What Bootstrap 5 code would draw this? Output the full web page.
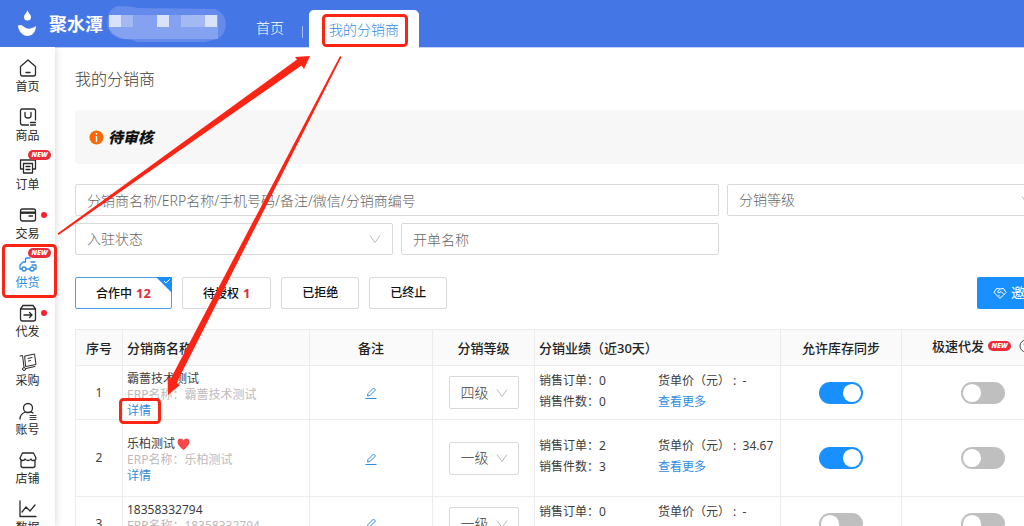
<!DOCTYPE html>
<html lang="zh-CN">
<head>
<meta charset="utf-8">
<meta name="viewport" content="width=device-width, initial-scale=1">
<title>我的分销商</title>
<link href="https://cdn.jsdelivr.net/npm/bootstrap@5.3.0/dist/css/bootstrap.min.css" rel="stylesheet">
<style>
:root{--brand:#4576e6;--blue:#1890ff;--alert:#fb2516;--line:#ececec}
body{font-family:"Noto Sans","Noto Sans CJK SC",sans-serif;font-size:12px;line-height:16px;color:#3c3c3c;height:100vh;overflow:hidden}
a{text-decoration:none;color:#2f8be0}
.topbar{height:47px;background:var(--brand);box-shadow:0 1px 0 #c3d2f7;flex:none}
.brand{font-size:18px;line-height:24px;font-weight:700;width:256px;padding-left:18px}
.brand-mark{margin-right:12px}
.top-link{font-size:14px;line-height:20px;color:#fff;font-weight:300}
.top-tab{background:#fff;color:#2f8be0;border-radius:5px 5px 0 0;padding:10px 20px 7px;margin-top:10px;height:38px;font-size:14px;line-height:20px;font-weight:300}
.top-rule{width:1px;height:12px;background:#a9c0f5;margin:0 6px 0 18px}
.side{width:55px;flex:none;padding-top:11px;box-shadow:0 0 8px rgba(0,0,0,.18);background:#fff;z-index:1}
.side-item{height:49px;color:#2a2a2a;flex:none;line-height:18px}
.side-item svg{width:18px;height:20px;fill:none;stroke:currentColor;stroke-width:1.3;stroke-linecap:round;stroke-linejoin:round}
.side-item.on{color:#2f8be0}
.new-tag{background:#ea2c3a;color:#fff;font:italic 900 7px/10px "Open Sans",sans-serif;border-radius:5px;width:23px;height:10px;text-align:center;display:inline-block}
.side .new-tag{position:absolute;left:28px;top:-6px}
.side-dot{position:absolute;left:41px;top:7px;width:6px;height:6px;border-radius:50%;background:#f5222d}
.sheet{width:calc(100% + 40px);padding:0 0 0 20px}
.sheet h1{font-size:16px;line-height:24px;font-weight:300;margin:20px 0 19px}
.notice{height:54px;background:#f7f7f7;border-radius:4px;padding-left:14px;font-size:15px;line-height:22px;font-weight:900;font-style:italic;color:#111}
.filters{display:grid;grid-template-columns:repeat(3,1fr);gap:7px 8px;margin:20px 19px 22px 0}
.filters .wide{grid-column:span 2}
.filters .form-control,.filters .form-select{height:32px;border:1px solid #d9d9d9;border-radius:2px;padding:4px 11px;font-size:14px;line-height:22px;font-weight:300;color:#666}
.filters .form-control::placeholder{color:#666}
.form-select{background-image:url("data:image/svg+xml,%3Csvg xmlns='http://www.w3.org/2000/svg' viewBox='0 0 12 12'%3E%3Cpath d='M1 2.5l5 7 5-7' fill='none' stroke='%23b8b8b8'/%3E%3C/svg%3E");background-size:12px 12px;background-position:right 11px center}
.states{gap:10px}
.state-btn{height:32px;border:1px solid #d9d9d9;border-radius:2px;background:#fff;padding:0 20px;font-size:12px;font-weight:500;color:#111;position:relative}
.state-btn b{color:#d9303a;font-size:13px;margin-left:4px}
.state-btn.on{border-color:#4a9fe8}
.state-btn svg{position:absolute;right:-1px;top:-1px}
.invite{height:32px;width:87px;background:var(--blue);color:#fff;border:0;border-radius:2px;font-size:14px;padding:0 0 0 16px;gap:4px}
.grid-table{table-layout:fixed;width:100%;margin:20px 0 0;border-collapse:collapse}
.grid-table th,.grid-table td{border:1px solid var(--line);padding:0 4px;vertical-align:middle}
.grid-table th{height:36px;background:#fafafa;font-size:13px;line-height:20px;font-weight:500;color:#222}
.grid-table td{height:54px}
.grid-table .tall td{height:77px}
.grid-table .who{padding-top:4px}
.erp{color:#c0b9bb}
.rank{width:70px;height:33px;border:1px solid #d9d9d9;border-radius:2px;font-size:14px;line-height:22px;padding:4px 11px;color:#3c3c3c;font-weight:300;margin:auto;background-position:right 10px center}
.perf{display:grid;grid-template-columns:119px 1fr;line-height:21px;white-space:nowrap;padding-bottom:4px}
.form-switch{padding:0;min-height:0;margin:0;display:flex;justify-content:center}
.form-switch .form-check-input{width:44px;height:22px;margin:0;border:0;background-color:#bfbfbf;float:none;background-image:url("data:image/svg+xml,%3Csvg xmlns='http://www.w3.org/2000/svg' viewBox='-4 -4 8 8'%3E%3Ccircle r='3.3' fill='%23fff'/%3E%3C/svg%3E")}
.form-switch .form-check-input:checked{background-color:var(--blue);background-image:url("data:image/svg+xml,%3Csvg xmlns='http://www.w3.org/2000/svg' viewBox='-4 -4 8 8'%3E%3Ccircle r='3.3' fill='%23fff'/%3E%3C/svg%3E")}
.marks{position:absolute;left:0;top:0;pointer-events:none;z-index:5}
</style>
</head>
<body class="d-flex flex-column position-relative">
<header class="topbar d-flex align-items-center text-white">
  <div class="brand d-flex align-items-center">
    <svg width="19" height="27" viewBox="0 0 19 27" fill="#fff" class="brand-mark"><path d="M9.500 0C10 3 13 4.500 13 7a3.500 3.500 0 0 1-7 0C6 4.500 9 3 9.500 0z"/><path d="M0 15.500c3-1.500 5 .5 7 2s6 2 11-1.500C18 22 14 26 9.500 26S0 21 0 15.500z"/></svg>
    <span>聚水潭</span>
    <svg class="ms-1" width="120" height="36" viewBox="0 0 120 36" aria-hidden="true"><path d="M10 0Q26 0 30 2L108 3Q119 8 119 18 118 32 106 34L98 36H30Q26 33 14 33 0 28 0 17 0 4 10 0z" fill="#648bec"/><path d="M2 9h109v24H18Q2 29 2 20z" fill="#84a2f0"/><path d="M2 9h12v12H2zM50 9h12v12H50zM98 9h12v12H98z" fill="#d8e2fb"/><path d="M14 9h12v12H14zM74 9h24v12H74z" fill="#a3b9f4"/></svg>
  </div>
  <a href="#" class="top-link pt-3 pb-2">首页</a>
  <span class="top-rule mt-3"></span>
  <a href="#" class="top-tab">我的分销商</a>
</header>
<div class="d-flex flex-grow-1 overflow-hidden">
  <nav class="side d-flex flex-column">
    <a href="#" class="side-item position-relative d-flex flex-column align-items-center"><svg viewBox="0 0 18 20"><path d="M1.500 8.500L9 2l7.500 6.500V16q0 2-2 2h-11q-2 0-2-2zM7 14.500h4"/></svg>首页</a>
    <a href="#" class="side-item position-relative d-flex flex-column align-items-center"><svg viewBox="0 0 18 20"><path d="M9.500 18h-6q-2 0-2-2V4q0-2 2-2h11q2 0 2 2v9M6 5.500v3q0 2.500 3 2.500t3-2.500v-3M11.500 15.500h5M11.500 18h5"/></svg>商品</a>
    <a href="#" class="side-item position-relative d-flex flex-column align-items-center"><svg viewBox="0 0 18 20"><path d="M4 13H1.500V4h15v9H14M4.500 7.500h9V17h-9zM7 10.500h4M7 13.500h4"/></svg>订单<span class="new-tag">NEW</span></a>
    <a href="#" class="side-item position-relative d-flex flex-column align-items-center"><svg viewBox="0 0 18 20"><path d="M3.500 4h11q2 0 2 2v8q0 2-2 2h-11q-2 0-2-2V6q0-2 2-2zM1.500 8h15M10 11h3.500"/><path d="M2 7.500h14" stroke-width="2"/></svg>交易<span class="side-dot"></span></a>
    <a href="#" class="side-item on position-relative d-flex flex-column align-items-center"><svg viewBox="0 0 18 20"><path d="M11 4H7.500q-1 0-1 1v3H4L1 11v4h2M7 15h4M15 15h2v-3M12 8h4M13 11h4M3 15a2 2 0 0 0 4 0 2 2 0 0 0-4 0M11 15a2 2 0 0 0 4 0 2 2 0 0 0-4 0"/></svg>供货<span class="new-tag">NEW</span></a>
    <a href="#" class="side-item position-relative d-flex flex-column align-items-center"><svg viewBox="0 0 18 20"><path d="M1.500 6L4 2.500h10L16.500 6v10q0 2-2 2h-11q-2 0-2-2zM1.500 6h15M5 12h8M10.500 9.500L13 12l-2.500 2.500"/></svg>代发<span class="side-dot"></span></a>
    <a href="#" class="side-item position-relative d-flex flex-column align-items-center"><svg viewBox="0 0 18 20" style="stroke-width:1"><path d="M1 4l2.500-.5L5 15M6 4l9.500-2L17 12.500l-10 2zM9 6.500l4-1M9.500 9l2-.5M7 16.500l9-2M3.500 17a1.500 1.500 0 0 0 3 0 1.500 1.500 0 0 0-3 0"/></svg>采购</a>
    <a href="#" class="side-item position-relative d-flex flex-column align-items-center"><svg viewBox="0 0 18 20"><path d="M4.500 7a4.500 4.500 0 0 0 9 0 4.500 4.500 0 0 0-9 0M1 18q0-5 5.500-7M11.500 11q1.500.3 2.500 1"/><path d="M11 14.500h6M11 16.500h6M11 18.500h6" stroke-width=".9"/></svg>账号</a>
    <a href="#" class="side-item position-relative d-flex flex-column align-items-center"><svg viewBox="0 0 18 20"><path d="M3.500 3h11L17 8q0 2.500-2.500 2.500T12 9q-1 1.500-3 1.500T6 9q-.5 1.500-2.500 1.500T1 8zM2 11v4.500q0 2 2 2h10q2 0 2-2V11"/></svg>店铺</a>
    <a href="#" class="side-item position-relative d-flex flex-column align-items-center"><svg viewBox="0 0 18 20"><path d="M1 2v15.500h16M3 13l4-5 4 4 5-6"/></svg>数据</a>
  </nav>
  <main class="flex-grow-1 overflow-hidden">
    <div class="sheet">
      <h1>我的分销商</h1>
      <div class="notice d-flex align-items-center"><svg width="15" height="15" viewBox="0 0 15 15" class="me-1"><circle cx="7.500" cy="7.500" r="7" fill="#fa6a0a"/><path d="M7.500 3v1.500M7.500 6v6" stroke="#fff" stroke-width="1.300"/></svg>待审核</div>
      <form class="filters">
        <input class="form-control wide" type="text" aria-label="分销商" placeholder="分销商名称/ERP名称/手机号码/备注/微信/分销商编号">
        <select class="form-select" aria-label="分销等级"><option>分销等级</option></select>
        <select class="form-select" aria-label="入驻状态"><option>入驻状态</option></select>
        <input class="form-control" type="text" aria-label="开单名称" placeholder="开单名称">
      </form>
      <div class="states d-flex align-items-center">
        <button type="button" class="state-btn on">合作中<b>12</b><svg width="16" height="16" viewBox="0 0 16 16"><path d="M0 0h16v16z" fill="#1890ff"/><path d="M8 4l2 2 4-4" fill="none" stroke="#fff"/></svg></button>
        <button type="button" class="state-btn">待授权<b>1</b></button>
        <button type="button" class="state-btn">已拒绝</button>
        <button type="button" class="state-btn">已终止</button>
        <button type="button" class="invite d-flex align-items-center ms-auto"><svg width="14" height="14" viewBox="0 0 14 14" fill="none" stroke="#fff"><path d="M7 12.500L1 6.500 3.500 2.500 7 3l3.500-.5L13 6.500zM7 3L4.500 6l1.500 1 2-1.500 3 3M5.500 9l1.500 1.500"/></svg>邀请</button>
      </div>
      <table class="grid-table">
        <colgroup><col width="47"><col><col width="123"><col width="102"><col width="246"><col width="121"><col width="162"></colgroup>
        <thead><tr>
          <th class="text-center">序号</th><th>分销商名称</th><th class="text-center">备注</th><th class="text-center">分销等级</th><th>分销业绩（近30天）</th><th class="text-center">允许库存同步</th>
          <th><div class="d-flex align-items-center justify-content-center gap-1 pb-1">极速代发<span class="new-tag">NEW</span><svg class="ms-1" width="14" height="14" viewBox="0 0 14 14" fill="none" stroke="#444"><circle cx="7" cy="7" r="6"/><path d="M5 5.500q0-2 2-2t2 2q0 1-2 2V9M7 10v1"/></svg></div></th>
        </tr></thead>
        <tbody>
          <tr>
            <td class="text-center">1</td>
            <td class="who">霸蔷技术测试<div class="erp">ERP名称：霸蔷技术测试</div><a href="#">详情</a></td>
            <td class="text-center"><a href="#" aria-label="编辑"><svg width="12" height="12" viewBox="0 0 12 12" fill="none" stroke="currentColor"><path d="M.5 11.500h11M2.500 9L3 6.500 8.500 1l2 2L5 8.500z"/></svg></a></td>
            <td><select class="form-select rank" aria-label="分销等级"><option>四级</option></select></td>
            <td><div class="perf"><span>销售订单：0</span><span>货单价（元）&nbsp;: &nbsp;-</span><span>销售件数：0</span><a href="#">查看更多</a></div></td>
            <td><div class="form-check form-switch"><input class="form-check-input" type="checkbox" role="switch" aria-label="允许库存同步" checked></div></td>
            <td><div class="form-check form-switch"><input class="form-check-input" type="checkbox" role="switch" aria-label="极速代发"></div></td>
          </tr>
          <tr class="tall">
            <td class="text-center">2</td>
            <td class="who"><div class="d-flex align-items-center">乐柏测试<svg width="15" height="12" viewBox="-2 0 15 12"><path d="M6.500 12Q0 7 .5 3.500 1 .5 3.500.5 5.500.5 6.500 2.500 7.500.5 9.500.5q2.500 0 3 3Q13 7 6.500 12z" fill="#f5484a"/></svg></div><div class="erp">ERP名称：乐柏测试</div><a href="#">详情</a></td>
            <td class="text-center"><a href="#" aria-label="编辑"><svg width="12" height="12" viewBox="0 0 12 12" fill="none" stroke="currentColor"><path d="M.5 11.500h11M2.500 9L3 6.500 8.500 1l2 2L5 8.500z"/></svg></a></td>
            <td><select class="form-select rank" aria-label="分销等级"><option>一级</option></select></td>
            <td><div class="perf"><span>销售订单：2</span><span>货单价（元）&nbsp;: &nbsp;34.67</span><span>销售件数：3</span><a href="#">查看更多</a></div></td>
            <td><div class="form-check form-switch"><input class="form-check-input" type="checkbox" role="switch" aria-label="允许库存同步" checked></div></td>
            <td><div class="form-check form-switch"><input class="form-check-input" type="checkbox" role="switch" aria-label="极速代发"></div></td>
          </tr>
          <tr>
            <td class="text-center">3</td>
            <td class="who">18358332794<div class="erp">ERP名称：18358332794</div><a href="#">详情</a></td>
            <td class="text-center"><a href="#" aria-label="编辑"><svg width="12" height="12" viewBox="0 0 12 12" fill="none" stroke="currentColor"><path d="M.5 11.500h11M2.500 9L3 6.500 8.500 1l2 2L5 8.500z"/></svg></a></td>
            <td><select class="form-select rank" aria-label="分销等级"><option>一级</option></select></td>
            <td><div class="perf"><span>销售订单：0</span><span>货单价（元）&nbsp;: &nbsp;-</span><span>销售件数：0</span><a href="#">查看更多</a></div></td>
            <td><div class="form-check form-switch"><input class="form-check-input" type="checkbox" role="switch" aria-label="允许库存同步"></div></td>
            <td><div class="form-check form-switch"><input class="form-check-input" type="checkbox" role="switch" aria-label="极速代发"></div></td>
          </tr>
        </tbody>
      </table>
    </div>
  </main>
</div>
<svg class="marks" width="430" height="430" viewBox="0 0 430 430" aria-hidden="true">
  <g fill="#fb2516"><path d="M57.500 233.500L297 59.500l-2-2.500 15-1-6 13-2.500-3.500L58.500 235z"/><path d="M340 56L170.500 379l-3-2 .5 18 12-10-3.500-2L341.500 57z"/></g>
  <g fill="none" stroke="#fb2516" stroke-width="3"><rect x="323.500" y="15.500" width="83" height="30" rx="3"/><rect x="3.500" y="245.500" width="52" height="51" rx="3"/><rect x="120.500" y="399.500" width="39" height="23" rx="3"/></g>
</svg>
<script src="https://cdn.jsdelivr.net/npm/bootstrap@5.3.0/dist/js/bootstrap.bundle.min.js"></script>
</body>
</html>
